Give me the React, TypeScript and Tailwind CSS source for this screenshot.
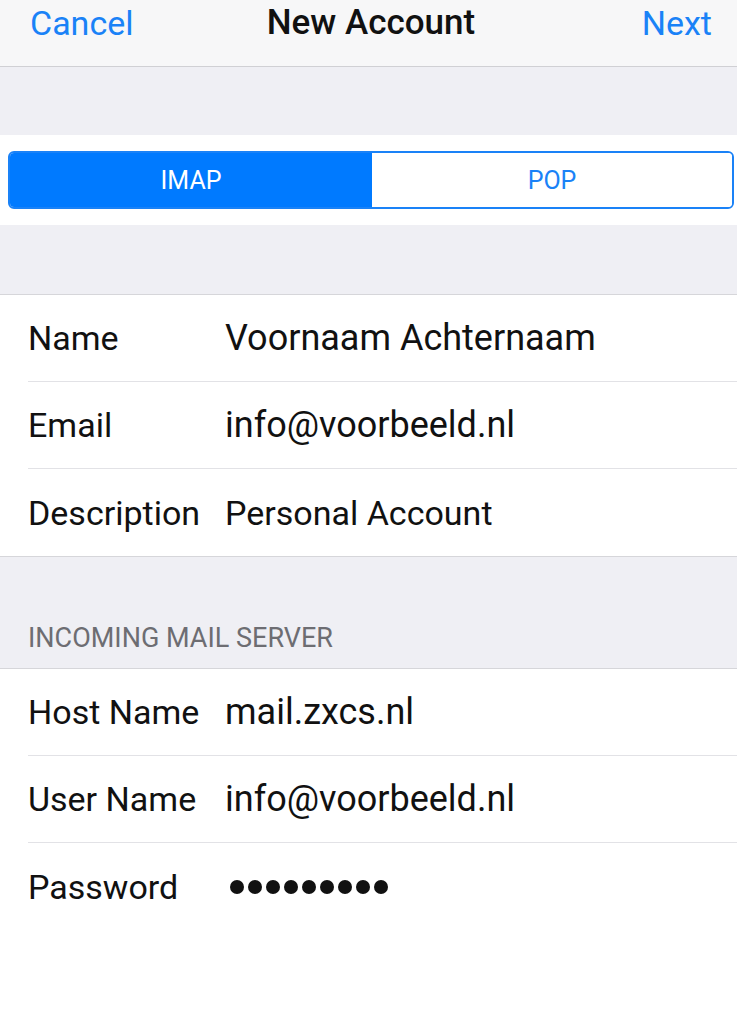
const blue = "text-[#1a82f7]";

const Row = ({
  label,
  value,
  valueSize = "text-[36px]",
  last = false,
}: {
  label: string;
  value?: string;
  valueSize?: string;
  last?: boolean;
}) => {
  return (
    <div className="pl-[28px]">
      <div
        className={`flex items-center h-[87px] ${
          last ? "" : "border-b border-[#e2e2e6]"
        }`}
      >
        <div className="w-[197px] shrink-0 text-[34px] text-[#111]">{label}</div>
        {value ? (
          <div className={`${valueSize} text-[#111]`}>{value}</div>
        ) : (
          <div className="flex gap-[4px] pl-[5px]">
            {Array.from({ length: 9 }).map((_, i) => (
              <span key={i} className="w-[14px] h-[14px] rounded-full bg-[#111]" />
            ))}
          </div>
        )}
      </div>
    </div>
  );
};

export default function App() {
  return (
    <div className="w-[737px] min-h-[1024px] bg-white font-['Roboto',sans-serif] leading-none">
      <div className="grid grid-cols-[1fr_auto_1fr] items-center h-[67px] pb-[21px] px-[30px] pr-[25px] bg-[#f7f7f8] border-b border-[#d0d0d4]">
        <div className={`${blue} text-[34px]`}>Cancel</div>
        <div className="text-[35px] font-medium text-[#111]">New Account</div>
        <div className={`${blue} text-[34px] text-right`}>Next</div>
      </div>

      <div className="h-[68px] bg-[#efeff4]" />

      <div className="pt-[16px] pb-[16px] pl-[8px] pr-[3px] bg-white">
        <div className="flex h-[58px] rounded-[6px] border-2 border-[#1a82f7] overflow-hidden text-[25px]">
          <div className="w-[362px] flex items-center justify-center bg-[#007aff] text-white">
            IMAP
          </div>
          <div className="flex-1 flex items-center justify-center bg-white text-[#1a82f7]">
            POP
          </div>
        </div>
      </div>

      <div className="h-[70px] bg-[#efeff4] border-b border-[#d6d6da]" />

      <div className="bg-white border-b border-[#d6d6da]">
        <Row label="Name" value="Voornaam Achternaam" />
        <Row label="Email" value="info@voorbeeld.nl" />
        <Row label="Description" value="Personal Account" valueSize="text-[34px]" last />
      </div>

      <div className="h-[112px] flex items-end pb-[16px] pl-[28px] bg-[#efeff4] border-b border-[#d6d6da]">
        <div className="text-[27px] leading-[27px] text-[#6d6d72]">INCOMING MAIL SERVER</div>
      </div>

      <div className="bg-white">
        <Row label="Host Name" value="mail.zxcs.nl" />
        <Row label="User Name" value="info@voorbeeld.nl" />
        <Row label="Password" last />
      </div>
    </div>
  );
}
